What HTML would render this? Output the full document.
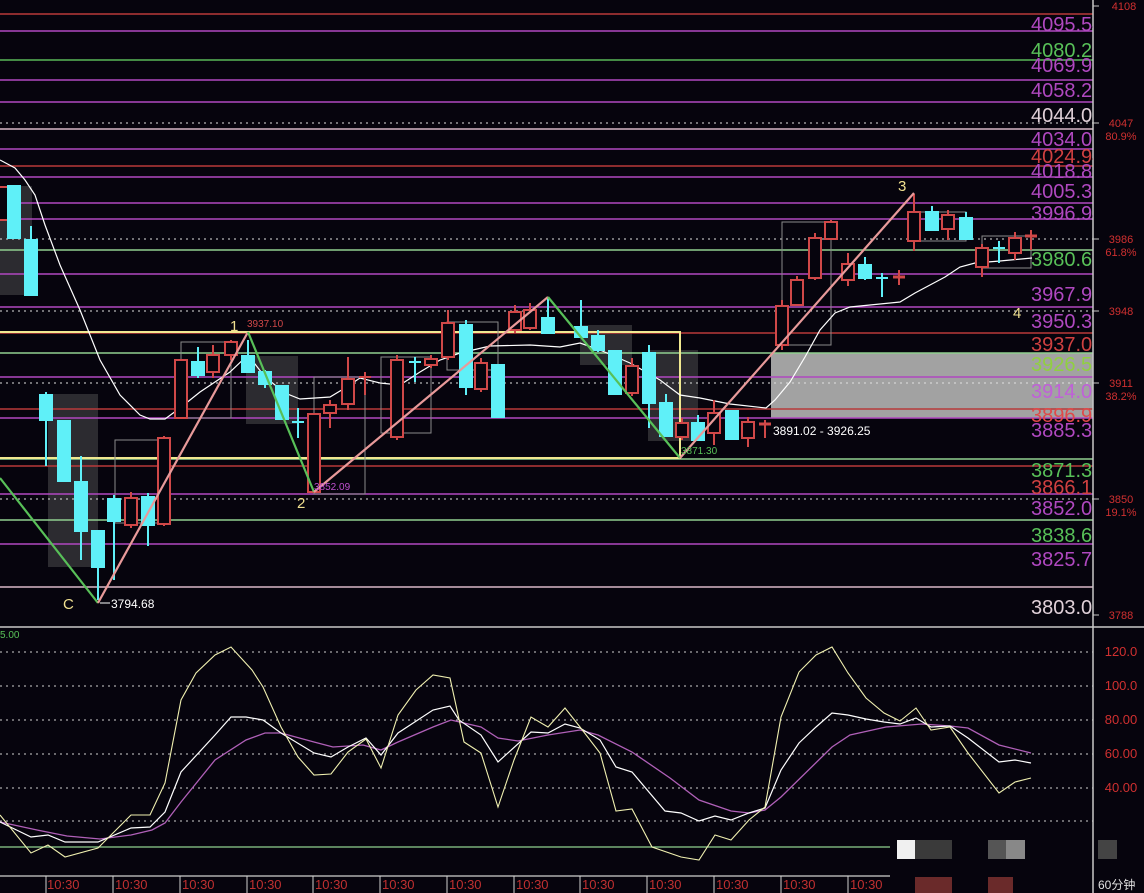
<!DOCTYPE html>
<html><head><meta charset="utf-8"><style>
html,body{margin:0;padding:0;background:#06040d;}
svg{display:block;font-family:"Liberation Sans","Noto Sans CJK SC",sans-serif;}
</style></head><body>
<svg width="1144" height="893" viewBox="0 0 1144 893" xmlns="http://www.w3.org/2000/svg">
<rect width="1144" height="893" fill="#06040d"/>
<defs><clipPath id="pc"><rect x="0" y="0" width="1093" height="626"/></clipPath></defs>

<g fill="#5a5a5a" opacity="0.45">
<rect x="0" y="186" width="32" height="109"/>
<rect x="48" y="394" width="50" height="173"/>
<rect x="246" y="356" width="52" height="68"/>
<rect x="580" y="325" width="52" height="40"/>
<rect x="648" y="350" width="50" height="91"/>
</g>
<rect x="771" y="353" width="322" height="65" fill="#a2a2a2"/>

<g stroke-width="1.5" clip-path="url(#pc)">
<line x1="0" y1="14" x2="1093" y2="14" stroke="#b83a3a"/>
<line x1="0" y1="31" x2="1093" y2="31" stroke="#b048c0"/>
<line x1="0" y1="60" x2="1093" y2="60" stroke="#58b858"/>
<line x1="0" y1="80" x2="1093" y2="80" stroke="#b048c0"/>
<line x1="0" y1="102" x2="1093" y2="102" stroke="#b048c0"/>
<line x1="0" y1="129" x2="1093" y2="129" stroke="#d8b8c8"/>
<line x1="0" y1="149" x2="1093" y2="149" stroke="#b048c0"/>
<line x1="0" y1="166" x2="1093" y2="166" stroke="#b83a3a"/>
<line x1="0" y1="177" x2="1093" y2="177" stroke="#b048c0"/>
<line x1="0" y1="203" x2="1093" y2="203" stroke="#b048c0"/>
<line x1="0" y1="219" x2="1093" y2="219" stroke="#b048c0"/>
<line x1="0" y1="250" x2="1093" y2="250" stroke="#90d090"/>
<line x1="0" y1="274" x2="1093" y2="274" stroke="#b048c0"/>
<line x1="0" y1="307" x2="1093" y2="307" stroke="#b048c0"/>
<line x1="0" y1="333" x2="1093" y2="333" stroke="#b83a3a"/>
<line x1="0" y1="353" x2="1093" y2="353" stroke="#90d090"/>
<line x1="0" y1="377" x2="1093" y2="377" stroke="#b048c0"/>
<line x1="0" y1="409" x2="1093" y2="409" stroke="#b83a3a"/>
<line x1="0" y1="418" x2="1093" y2="418" stroke="#b048c0"/>
<line x1="0" y1="459" x2="1093" y2="459" stroke="#90d090"/>
<line x1="0" y1="466" x2="1093" y2="466" stroke="#b83a3a"/>
<line x1="0" y1="494" x2="1093" y2="494" stroke="#b048c0"/>
<line x1="0" y1="520" x2="1093" y2="520" stroke="#90d090"/>
<line x1="0" y1="544" x2="1093" y2="544" stroke="#b048c0"/>
<line x1="0" y1="587" x2="1093" y2="587" stroke="#d8b8c8"/>
</g>
<g stroke="#e0e0e0" stroke-width="1" stroke-dasharray="2,4">
<line x1="0" y1="123" x2="1093" y2="123"/>
<line x1="0" y1="239" x2="1093" y2="239"/>
<line x1="0" y1="311" x2="1093" y2="311"/>
<line x1="0" y1="383" x2="1093" y2="383"/>
<line x1="0" y1="499" x2="1093" y2="499"/>
</g>
<line x1="0" y1="627" x2="1144" y2="627" stroke="#c8c8c8" stroke-width="1.5"/>
<line x1="1093" y1="0" x2="1093" y2="893" stroke="#c8c8c8" stroke-width="1.5"/>

<polyline points="0,332 680,332 680,458 0,458" fill="none" stroke="#f0e890" stroke-width="2"/>

<g fill="none" stroke="#8a8a8a" stroke-width="1">
<rect x="115" y="440" width="49" height="83"/>
<rect x="181" y="342" width="50" height="76"/>
<rect x="314" y="377" width="51" height="117"/>
<rect x="381" y="357" width="50" height="76"/>
<rect x="447" y="322" width="51" height="48"/>
<rect x="782" y="222" width="49" height="123"/>
<rect x="914" y="212" width="52" height="29"/>
<rect x="982" y="236" width="49" height="32"/>
</g>

<polyline fill="none" stroke="#ffffff" stroke-width="1.2" points="0,160 15,168 25,180 35,195 45,225 60,265 80,310 100,360 120,395 140,415 150,419 165,419 180,408 200,392 230,372 248,355 265,377 285,393 300,399 330,397 345,388 360,378 380,383 400,385 420,372 440,360 460,353 490,346 530,345 560,347 580,343 600,350 630,363 660,380 680,395 700,398 730,404 766,408 775,400 790,382 805,357 820,330 835,313 850,307 870,305 900,302 915,293 930,285 945,277 960,267 975,263 1000,261 1032,258"/>

<g stroke="#d04848" stroke-width="2" fill="#06040d">
<rect x="-4" y="187" width="12" height="33"/>
<line x1="131" y1="492" x2="131" y2="528"/><rect x="125" y="498" width="12" height="27"/>
<line x1="164" y1="436" x2="164" y2="526"/><rect x="158" y="438" width="12" height="86"/>
<rect x="175" y="360" width="12" height="58"/>
<line x1="213" y1="345" x2="213" y2="378"/><rect x="207" y="355" width="12" height="17"/>
<line x1="231" y1="340" x2="231" y2="360"/><rect x="225" y="342" width="12" height="13"/>
<rect x="308" y="414" width="12" height="78"/>
<line x1="330" y1="400" x2="330" y2="428"/><rect x="324" y="405" width="12" height="8"/>
<line x1="348" y1="357" x2="348" y2="410"/><rect x="342" y="379" width="12" height="25"/>
<line x1="365" y1="372" x2="365" y2="395"/><line x1="359" y1="377" x2="371" y2="377"/>
<line x1="397" y1="355" x2="397" y2="440"/><rect x="391" y="360" width="12" height="77"/>
<line x1="431" y1="355" x2="431" y2="368"/><rect x="425" y="359" width="12" height="6"/>
<line x1="448" y1="310" x2="448" y2="360"/><rect x="442" y="323" width="12" height="34"/>
<line x1="481" y1="358" x2="481" y2="392"/><rect x="475" y="363" width="12" height="26"/>
<line x1="515" y1="305" x2="515" y2="333"/><rect x="509" y="312" width="12" height="18"/>
<line x1="530" y1="303" x2="530" y2="330"/><rect x="524" y="310" width="12" height="18"/>
<line x1="632" y1="358" x2="632" y2="396"/><rect x="626" y="366" width="12" height="27"/>
<line x1="682" y1="418" x2="682" y2="440"/><rect x="676" y="423" width="12" height="14"/>
<line x1="714" y1="400" x2="714" y2="445"/><rect x="708" y="413" width="12" height="20"/>
<line x1="748" y1="417" x2="748" y2="447"/><rect x="742" y="422" width="12" height="16"/>
<line x1="765" y1="420" x2="765" y2="438"/><line x1="759" y1="424" x2="771" y2="424" stroke-width="3"/>
<line x1="782" y1="300" x2="782" y2="350"/><rect x="776" y="306" width="12" height="39"/>
<line x1="797" y1="276" x2="797" y2="305"/><rect x="791" y="280" width="12" height="25"/>
<line x1="815" y1="233" x2="815" y2="280"/><rect x="809" y="238" width="12" height="40"/>
<line x1="831" y1="220" x2="831" y2="240"/><rect x="825" y="222" width="12" height="17"/>
<line x1="848" y1="253" x2="848" y2="286"/><rect x="842" y="264" width="12" height="16"/>
<line x1="899" y1="270" x2="899" y2="285"/><line x1="893" y1="277" x2="905" y2="277" stroke-width="3"/>
<line x1="914" y1="194" x2="914" y2="251"/><rect x="908" y="212" width="12" height="29"/>
<line x1="948" y1="210" x2="948" y2="240"/><rect x="942" y="215" width="12" height="14"/>
<line x1="982" y1="244" x2="982" y2="277"/><rect x="976" y="248" width="12" height="19"/>
<line x1="1015" y1="232" x2="1015" y2="260"/><rect x="1009" y="238" width="12" height="15"/>
<line x1="1031" y1="230" x2="1031" y2="250"/><line x1="1025" y1="236" x2="1037" y2="236" stroke-width="3"/>
</g>
<g stroke="#5ff0f8" stroke-width="2" fill="#5ff0f8">
<rect x="8" y="186" width="12" height="52"/>
<line x1="31" y1="226" x2="31" y2="296"/><rect x="25" y="240" width="12" height="55"/>
<line x1="46" y1="392" x2="46" y2="466"/><rect x="40" y="395" width="12" height="25"/>
<rect x="58" y="421" width="12" height="60"/>
<line x1="81" y1="456" x2="81" y2="560"/><rect x="75" y="482" width="12" height="49"/>
<line x1="98" y1="531" x2="98" y2="600"/><rect x="92" y="531" width="12" height="36"/>
<line x1="114" y1="495" x2="114" y2="580"/><rect x="108" y="499" width="12" height="22"/>
<line x1="148" y1="493" x2="148" y2="546"/><rect x="142" y="497" width="12" height="28"/>
<line x1="198" y1="347" x2="198" y2="378"/><rect x="192" y="362" width="12" height="13"/>
<line x1="248" y1="340" x2="248" y2="372"/><rect x="242" y="356" width="12" height="16"/>
<line x1="265" y1="370" x2="265" y2="388"/><rect x="259" y="372" width="12" height="12"/>
<rect x="276" y="386" width="12" height="33"/>
<line x1="298" y1="408" x2="298" y2="438"/><line x1="292" y1="422" x2="304" y2="422"/>
<line x1="415" y1="357" x2="415" y2="382"/><line x1="409" y1="362" x2="421" y2="362"/>
<line x1="466" y1="320" x2="466" y2="395"/><rect x="460" y="325" width="12" height="62"/>
<rect x="492" y="365" width="12" height="52"/>
<line x1="548" y1="298" x2="548" y2="334"/><rect x="542" y="318" width="12" height="15"/>
<line x1="581" y1="300" x2="581" y2="337"/><rect x="575" y="327" width="12" height="10"/>
<line x1="598" y1="330" x2="598" y2="352"/><rect x="592" y="336" width="12" height="14"/>
<rect x="609" y="351" width="12" height="43"/>
<line x1="649" y1="345" x2="649" y2="428"/><rect x="643" y="353" width="12" height="50"/>
<line x1="666" y1="394" x2="666" y2="437"/><rect x="660" y="403" width="12" height="33"/>
<line x1="698" y1="415" x2="698" y2="441"/><rect x="692" y="423" width="12" height="17"/>
<rect x="726" y="411" width="12" height="28"/>
<line x1="865" y1="257" x2="865" y2="280"/><rect x="859" y="265" width="12" height="13"/>
<line x1="882" y1="273" x2="882" y2="297"/><line x1="876" y1="278" x2="888" y2="278"/>
<line x1="932" y1="206" x2="932" y2="230"/><rect x="926" y="212" width="12" height="18"/>
<line x1="966" y1="212" x2="966" y2="240"/><rect x="960" y="218" width="12" height="21"/>
<line x1="999" y1="241" x2="999" y2="263"/><line x1="993" y1="248" x2="1005" y2="248"/>
</g>

<g stroke-width="2.2" fill="none">
<polyline points="0,478 98,603" stroke="#58c058"/>
<polyline points="98,603 248,332" stroke="#e89a9a"/>
<polyline points="248,332 314,492" stroke="#58c058"/>
<polyline points="314,492 548,297" stroke="#e89a9a"/>
<polyline points="548,297 680,458" stroke="#58c058"/>
<polyline points="680,458 914,193" stroke="#e89a9a"/>
</g>

<g font-size="15" fill="#f0e090">
<text x="63" y="609">C</text><text x="230" y="331">1</text><text x="297" y="508">2</text><text x="898" y="191">3</text><text x="1013" y="318">4</text>
</g>
<text x="247" y="327" font-size="10" fill="#d04848">3937.10</text>
<text x="314" y="490" font-size="10" fill="#c050d0">3852.09</text>
<text x="681" y="454" font-size="10" fill="#58c058">3871.30</text>
<line x1="100" y1="603" x2="110" y2="603" stroke="#fff"/>
<text x="111" y="608" font-size="12" fill="#ffffff">3794.68</text>
<text x="773" y="435" font-size="12" fill="#ffffff">3891.02 - 3926.25</text>

<g font-size="20" clip-path="url(#pc)">
<text x="1031" y="31" fill="#b048c0">4095.54</text>
<text x="1031" y="57" fill="#58c058">4080.29</text>
<text x="1031" y="72" fill="#b048c0">4069.97</text>
<text x="1031" y="97" fill="#b048c0">4058.23</text>
<text x="1031" y="122" fill="#e0d0d8">4044.00</text>
<text x="1031" y="146" fill="#b048c0">4034.00</text>
<text x="1031" y="163" fill="#d04040">4024.94</text>
<text x="1031" y="178" fill="#b048c0">4018.80</text>
<text x="1031" y="198" fill="#b048c0">4005.37</text>
<text x="1031" y="220" fill="#b048c0">3996.94</text>
<text x="1031" y="266" fill="#58c058">3980.68</text>
<text x="1031" y="301" fill="#b048c0">3967.97</text>
<text x="1031" y="328" fill="#b048c0">3950.33</text>
<text x="1031" y="351" fill="#d04040">3937.00</text>
<text x="1031" y="371" fill="#90d040">3926.59</text>
<text x="1031" y="398" fill="#c060d8">3914.00</text>
<text x="1031" y="422" fill="#e04848">3896.97</text>
<text x="1031" y="437" fill="#b048c0">3885.3</text>
<text x="1031" y="477" fill="#58c058">3871.30</text>
<text x="1031" y="494" fill="#d04040">3866.1</text>
<text x="1031" y="515" fill="#b048c0">3852.09</text>
<text x="1031" y="542" fill="#58c058">3838.62</text>
<text x="1031" y="566" fill="#b048c0">3825.76</text>
<text x="1031" y="614" fill="#e0d0d8">3803.02</text>
</g>

<g font-size="11" fill="#d03030" text-anchor="middle">
<text x="1124" y="10">4108</text>
<text x="1121" y="127">4047</text><text x="1121" y="140">80.9%</text>
<text x="1121" y="243">3986</text><text x="1121" y="256">61.8%</text>
<text x="1121" y="315">3948</text>
<text x="1121" y="387">3911</text><text x="1121" y="400">38.2%</text>
<text x="1121" y="503">3850</text><text x="1121" y="516">19.1%</text>
<text x="1121" y="619">3788</text>
</g>
<g stroke="#c8c8c8"><line x1="1093" y1="6" x2="1099" y2="6"/><line x1="1093" y1="123" x2="1099" y2="123"/><line x1="1093" y1="239" x2="1099" y2="239"/><line x1="1093" y1="311" x2="1099" y2="311"/><line x1="1093" y1="383" x2="1099" y2="383"/><line x1="1093" y1="499" x2="1099" y2="499"/><line x1="1093" y1="615" x2="1099" y2="615"/></g>

<text x="0" y="638" font-size="10" fill="#58c058">5.00</text>
<g stroke="#d0d0d0" stroke-width="1" stroke-dasharray="2,4">
<line x1="0" y1="652" x2="1093" y2="652"/><line x1="0" y1="686" x2="1093" y2="686"/><line x1="0" y1="720" x2="1093" y2="720"/><line x1="0" y1="754" x2="1093" y2="754"/><line x1="0" y1="788" x2="1093" y2="788"/><line x1="0" y1="821" x2="1093" y2="821"/>
</g>
<line x1="0" y1="847" x2="890" y2="847" stroke="#90d090" stroke-width="1.2"/>
<g font-size="13" fill="#d03030" text-anchor="middle">
<text x="1121" y="656">120.0</text><text x="1121" y="690">100.0</text><text x="1121" y="724">80.00</text><text x="1121" y="758">60.00</text><text x="1121" y="792">40.00</text>
</g>
<polyline fill="none" stroke="#b060b8" stroke-width="1.3" points="0,822 37,830 67,836 100,839 131,835 152,830 165,823 181,802 215,760 246,740 265,733 281,733 314,742 333,747 363,745 381,750 398,742 433,727 451,720 481,727 498,738 518,741 548,735 580,730 598,735 632,752 670,778 699,800 731,811 749,813 765,810 781,797 832,747 850,735 886,727 922,724 950,726 968,728 999,745 1031,753"/>
<polyline fill="none" stroke="#ffffff" stroke-width="1.2" points="0,822 31,837 48,835 65,842 98,842 131,828 150,827 165,812 181,772 215,735 231,717 246,717 263,720 281,733 314,753 331,757 348,747 366,738 381,755 398,733 433,710 450,706 459,720 481,735 498,762 531,732 548,733 565,724 580,728 600,740 616,767 632,772 665,811 681,813 699,821 715,816 731,820 749,813 765,808 781,770 799,743 816,727 832,713 848,715 866,719 884,722 900,724 916,718 931,727 950,726 968,738 999,762 1015,760 1031,763"/>
<polyline fill="none" stroke="#f0f0b0" stroke-width="1.1" points="0,815 31,853 48,845 65,857 98,848 131,815 150,815 165,783 181,700 196,673 215,655 231,647 252,670 263,687 281,727 298,757 314,775 331,774 348,752 366,739 381,768 398,715 416,690 433,675 450,678 464,742 481,753 498,807 514,760 531,717 548,727 565,708 580,727 600,753 616,811 632,809 652,847 681,857 699,860 715,835 731,840 749,820 765,807 781,717 799,672 816,655 832,647 848,673 866,698 884,713 900,721 916,708 931,730 950,727 968,753 999,793 1015,782 1031,778"/>

<line x1="0" y1="876" x2="890" y2="876" stroke="#d0d0d0" stroke-width="1.2"/>
<g stroke="#d0d0d0"><line x1="46" y1="876" x2="46" y2="893"/><line x1="113" y1="876" x2="113" y2="893"/><line x1="180" y1="876" x2="180" y2="893"/><line x1="247" y1="876" x2="247" y2="893"/><line x1="313" y1="876" x2="313" y2="893"/><line x1="380" y1="876" x2="380" y2="893"/><line x1="447" y1="876" x2="447" y2="893"/><line x1="514" y1="876" x2="514" y2="893"/><line x1="580" y1="876" x2="580" y2="893"/><line x1="647" y1="876" x2="647" y2="893"/><line x1="714" y1="876" x2="714" y2="893"/><line x1="781" y1="876" x2="781" y2="893"/><line x1="848" y1="876" x2="848" y2="893"/></g>
<g font-size="13" fill="#c03030">
<text x="47" y="889">10:30</text><text x="115" y="889">10:30</text><text x="182" y="889">10:30</text><text x="249" y="889">10:30</text><text x="315" y="889">10:30</text><text x="382" y="889">10:30</text><text x="449" y="889">10:30</text><text x="516" y="889">10:30</text><text x="582" y="889">10:30</text><text x="649" y="889">10:30</text><text x="716" y="889">10:30</text><text x="783" y="889">10:30</text><text x="850" y="889">10:30</text>
</g>
<text x="1098" y="889" font-size="12" fill="#e0e0e0">60分钟</text>
<rect x="897" y="840" width="18" height="19" fill="#f0f0f0"/>
<rect x="915" y="840" width="37" height="19" fill="#3a3a3a"/>
<rect x="988" y="840" width="18" height="19" fill="#555"/>
<rect x="1006" y="840" width="19" height="19" fill="#888"/>
<rect x="1098" y="840" width="19" height="19" fill="#444"/>
<rect x="915" y="877" width="37" height="16" fill="#6a2a2a"/>
<rect x="988" y="877" width="25" height="16" fill="#6a2a2a"/>
</svg>
</body></html>
